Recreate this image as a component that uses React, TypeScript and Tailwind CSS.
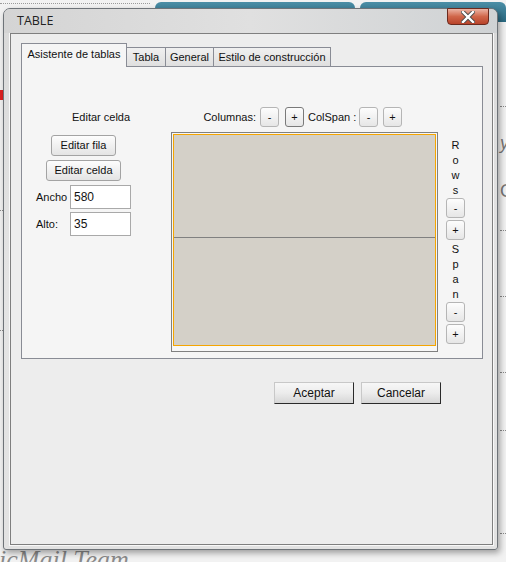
import React from "react";

const F = { fontFamily: '"Liberation Sans", Arial, sans-serif' };

function SmallBtn({ label, dark }: { label: string; dark?: boolean }) {
  return (
    <div
      className={`w-[19px] h-[20px] rounded-[3px] border ${dark ? "border-[#7a7a7a]" : "border-[#b5b5b5]"} bg-gradient-to-b from-[#fdfdfd] to-[#e6e6e6] flex items-center justify-center text-[11px] text-[#111] leading-none`}
    >
      {label}
    </div>
  );
}

function Letter({ c }: { c: string }) {
  return <div className="h-[15px] leading-[15px] text-center text-[11px] text-[#111]">{c}</div>;
}

export default function App() {
  return (
    <div className="relative w-[506px] h-[562px] overflow-hidden bg-[#f2f2f2]" style={F}>
      {/* background desktop bits */}
      <div className="absolute left-0 top-[3px] w-[150px] border-t border-dotted border-[#9a9a9a]" />
      <div className="absolute left-[155px] top-[2px] w-[200px] h-[20px] rounded-t-[6px] bg-gradient-to-b from-[#4b8ea6] to-[#2a6a82]" />
      <div className="absolute left-[360px] top-[2px] w-[146px] h-[20px] rounded-t-[6px] bg-gradient-to-b from-[#4b8ea6] to-[#2a6a82]" />
      <div className="absolute left-0 top-[90px] w-[3px] h-[10px] bg-[#e02020]" />
      <div className="absolute left-[500px] top-[130px] text-[18px] text-[#777] italic">y</div>
      <div className="absolute left-[500px] top-[178px] text-[18px] text-[#777]">C</div>
      <div className="absolute left-[500px] top-[106px] w-[6px] border-t border-dotted border-[#888]" />
      <div className="absolute left-[500px] top-[230px] w-[6px] border-t border-dotted border-[#888]" />
      <div className="absolute left-[500px] top-[296px] w-[6px] border-t border-dotted border-[#888]" />
      <div className="absolute left-[500px] top-[372px] w-[6px] border-t border-dotted border-[#888]" />
      <div className="absolute left-[500px] top-[430px] w-[6px] border-t border-dotted border-[#888]" />
      <div className="absolute left-[500px] top-[533px] w-[6px] border-t border-dotted border-[#888]" />
      <div className="absolute left-0 top-[210px] w-[3px] border-t border-dotted border-[#888]" />
      <div className="absolute left-0 top-[330px] w-[3px] border-t border-dotted border-[#888]" />
      <div
        className="absolute left-[-14px] top-[540px] text-[26px] italic text-[#8a8a8a] whitespace-nowrap"
        style={{ fontFamily: '"Liberation Serif", serif' }}
      >
        nicMail Team
      </div>

      {/* window */}
      <div className="absolute left-[3px] top-[8px] w-[495px] h-[542px] rounded-t-[7px] rounded-b-[3px] border border-[#6e7378] bg-gradient-to-b from-[#d9d9d9] via-[#e4e4e4] to-[#e2e2e2] shadow-[2px_3px_6px_rgba(0,0,0,0.35)] flex flex-col">
        {/* title bar */}
        <div className="relative h-[24px] flex items-center pl-[13px] bg-gradient-to-r from-[#d4d4d4] via-[#e0e0e0] to-[#cfd2d4] rounded-t-[6px]">
          <span className="text-[12.5px] text-[#222]" style={{ fontFamily: '"Open Sans", "Noto Sans", sans-serif' }}>
            TABLE
          </span>
          <div className="absolute right-[8px] top-[-1px] w-[42px] h-[17px] rounded-b-[4px] border border-[#6b2a1e] bg-gradient-to-b from-[#eab3a4] via-[#d0664a] to-[#b8432a] flex items-center justify-center">
            <svg width="14" height="12" viewBox="0 0 14 12">
              <path d="M2 1 L12 11 M12 1 L2 11" stroke="#4a4a4a" strokeWidth="4.2" strokeLinecap="square" />
              <path d="M2 1 L12 11 M12 1 L2 11" stroke="#ffffff" strokeWidth="2.4" strokeLinecap="square" />
            </svg>
          </div>
        </div>

        {/* client area */}
        <div className="ml-[6px] w-[483px] h-[512px] border border-[#7f7f7f] bg-[#ededed] shadow-[0_0_0_1px_#f8f8f8] flex flex-col">
          {/* tabs */}
          <div className="ml-[10px] mt-[9px] flex items-end h-[24px]">
            <div className="relative z-10 w-[106px] h-[24px] border border-b-0 border-[#898c95] bg-[#f5f5f5] flex items-center justify-center text-[11px] text-[#111] pb-[2px]">
              Asistente de tablas
            </div>
            <div className="w-[39px] h-[20px] border border-l-0 border-b-0 border-[#898c95] bg-gradient-to-b from-[#f0f0f0] to-[#dedede] flex items-center justify-center text-[11px] text-[#111]">
              Tabla
            </div>
            <div className="w-[48px] h-[20px] border border-l-0 border-b-0 border-[#898c95] bg-gradient-to-b from-[#f0f0f0] to-[#dedede] flex items-center justify-center text-[11px] text-[#111]">
              General
            </div>
            <div className="w-[117px] h-[20px] border border-l-0 border-b-0 border-[#898c95] bg-gradient-to-b from-[#f0f0f0] to-[#dedede] flex items-center justify-center text-[11px] text-[#111]">
              Estilo de construcción
            </div>
          </div>

          {/* panel */}
          <div className="ml-[10px] mt-[-1px] w-[462px] h-[293px] border border-[#898c95] bg-[#f5f5f5] flex text-[11px] text-[#111]">
            {/* left column */}
            <div className="w-[149px] flex flex-col pt-[43px]">
              <div className="ml-[50px] h-[14px] leading-[14px]">Editar celda</div>
              <div className="ml-[29px] mt-[11px] w-[65px] h-[21px] rounded-[3px] border border-[#a3a3a3] bg-gradient-to-b from-[#fdfdfd] to-[#e4e4e4] flex items-center justify-center">
                Editar fila
              </div>
              <div className="ml-[24px] mt-[4px] w-[75px] h-[21px] rounded-[3px] border border-[#a3a3a3] bg-gradient-to-b from-[#fdfdfd] to-[#e4e4e4] flex items-center justify-center">
                Editar celda
              </div>
              <div className="ml-[14px] mt-[4px] flex items-center">
                <div className="w-[34px]">Ancho</div>
                <div className="w-[61px] h-[24px] border border-[#a9a9a9] bg-white flex items-center pl-[3px] text-[12px]">580</div>
              </div>
              <div className="ml-[14px] mt-[3px] flex items-center">
                <div className="w-[34px]">Alto:</div>
                <div className="w-[61px] h-[24px] border border-[#a9a9a9] bg-white flex items-center pl-[3px] text-[12px]">35</div>
              </div>
            </div>

            {/* right area */}
            <div className="flex flex-col pt-[40px]">
              <div className="flex items-center h-[20px]">
                <div className="w-[89px] text-right pr-[4px]">Columnas:</div>
                <SmallBtn label="-" />
                <div className="w-[6px]" />
                <SmallBtn label="+" dark />
                <div className="w-[55px] pl-[4px]">ColSpan :</div>
                <SmallBtn label="-" />
                <div className="w-[5px]" />
                <SmallBtn label="+" />
              </div>
              <div className="mt-[5px] flex">
                <div className="w-[267px] h-[220px] border border-[#808080] bg-[#f7f7f7] p-[1px]">
                  <div className="w-[263px] h-[212px] border border-[#f5a500] bg-[#d4d0c8] flex flex-col">
                    <div className="h-[103px] border-b border-[#808080]" />
                  </div>
                </div>
                <div className="ml-[8px] w-[19px] flex flex-col pt-[6px]">
                  <Letter c="R" />
                  <Letter c="o" />
                  <Letter c="w" />
                  <Letter c="s" />
                  <SmallBtn label="-" />
                  <div className="h-[2px]" />
                  <SmallBtn label="+" />
                  <div className="h-[2px]" />
                  <Letter c="S" />
                  <Letter c="p" />
                  <Letter c="a" />
                  <Letter c="n" />
                  <SmallBtn label="-" />
                  <div className="h-[2px]" />
                  <SmallBtn label="+" />
                </div>
              </div>
            </div>
          </div>

          {/* bottom buttons */}
          <div className="mt-[23px] flex gap-[7px] pl-[263px]">
            <div className="w-[80px] h-[22px] border border-[#c8c8c8] border-r-[#2a2a2a] border-b-[#2a2a2a] bg-gradient-to-b from-[#f7f7f7] via-[#ececec] to-[#d6d6d6] flex items-center justify-center text-[12px] text-[#111]">
              Aceptar
            </div>
            <div className="w-[80px] h-[22px] border border-[#c8c8c8] border-r-[#2a2a2a] border-b-[#2a2a2a] bg-gradient-to-b from-[#f7f7f7] via-[#ececec] to-[#d6d6d6] flex items-center justify-center text-[12px] text-[#111]">
              Cancelar
            </div>
          </div>
        </div>
      </div>
    </div>
  );
}
